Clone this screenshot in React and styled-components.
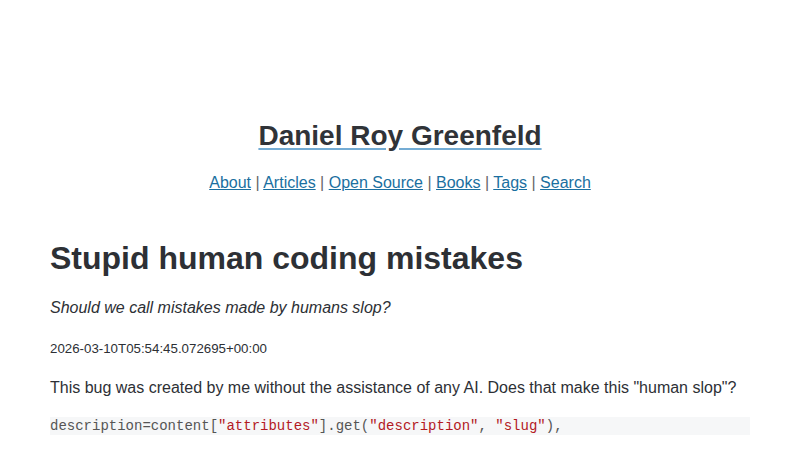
import React from 'react';
import styled, { createGlobalStyle } from 'styled-components';

const GlobalStyle = createGlobalStyle`
  body {
    margin: 0;
    background: #fff;
    color: #2d3035;
    font-family: "Liberation Sans", Arial, sans-serif;
  }
`

const Page = styled.div`
  max-width: 700px;
  margin: 0 auto;
  padding-top: 118px;
`

const Header = styled.header`
  text-align: center;
`

const SiteTitle = styled.a`
  display: inline-block;
  font-size: 28px;
  font-weight: bold;
  color: #303338;
  text-decoration: underline;
  text-decoration-color: #74acd4;
  text-underline-offset: 3px;
  line-height: 36px;
`

const Nav = styled.nav`
  margin-top: 18px;
  font-size: 16px;
  color: #666;
  line-height: 22px;
`

const NavLink = styled.a`
  color: #1a6fa0;
  text-decoration: underline;
`

const Title = styled.h1`
  margin: 44px 0 0;
  font-size: 32px;
  line-height: 40px;
  font-weight: bold;
`

const Subtitle = styled.p`
  margin: 19px 0 0;
  font-style: italic;
  font-size: 16px;
  line-height: 22px;
`

const Stamp = styled.p`
  margin: 21px 0 0;
  font-size: 13.3px;
  line-height: 18px;
`

const Text = styled.p`
  margin: 19px 0 0;
  font-size: 16px;
  line-height: 22px;
`

const Code = styled.pre`
  margin: 18px 0 0;
  background: #f6f7f8;
  font-family: "Liberation Mono", "Courier New", monospace;
  font-size: 14px;
  line-height: 18px;
  color: #555;
`

const Str = styled.span`
  color: #b3191f;
`

const links = ['About', 'Articles', 'Open Source', 'Books', 'Tags', 'Search']

export default function App() {
  return (
    <>
      <GlobalStyle />
      <Page>
        <Header>
          <SiteTitle href="#">Daniel Roy Greenfeld</SiteTitle>
          <Nav>
            {links.map((l, i) => (
              <React.Fragment key={l}>
                {i > 0 && ' | '}
                <NavLink href="#">{l}</NavLink>
              </React.Fragment>
            ))}
          </Nav>
        </Header>
        <Title>Stupid human coding mistakes</Title>
        <Subtitle>Should we call mistakes made by humans slop?</Subtitle>
        <Stamp>2026-03-10T05:54:45.072695+00:00</Stamp>
        <Text>This bug was created by me without the assistance of any AI. Does that make this "human slop"?</Text>
        <Code>description=content[<Str>"attributes"</Str>].get(<Str>"description"</Str>, <Str>"slug"</Str>),</Code>
      </Page>
    </>
  )
}
